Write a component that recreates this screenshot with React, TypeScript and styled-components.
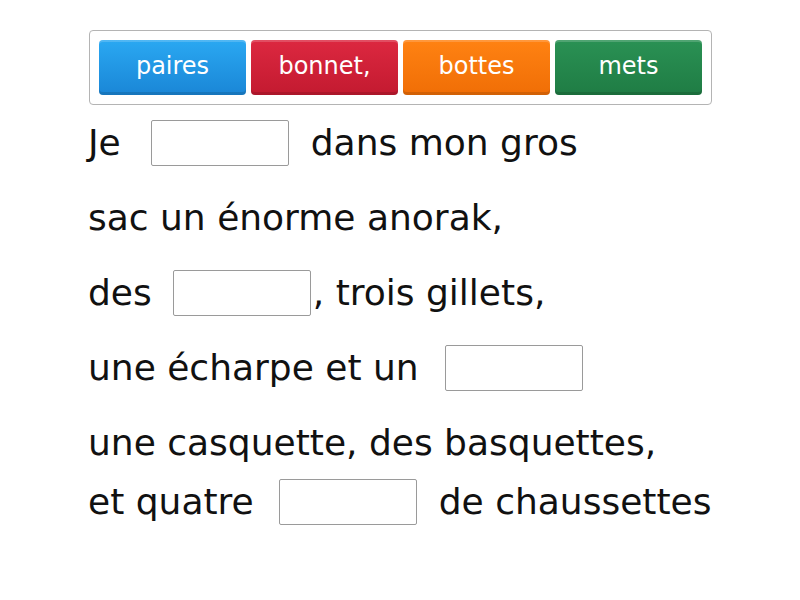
import React from 'react';
import styled, { createGlobalStyle } from 'styled-components';

const GlobalStyle = createGlobalStyle`
  html, body {
    margin: 0;
    padding: 0;
    background: #ffffff;
  }
  body {
    font-family: "DejaVu Sans", "Noto Sans", sans-serif;
  }
`;

interface Word {
  label: string;
  top: string;
  bottom: string;
}

const words: Word[] = [
  { label: 'paires', top: '#2aa8f2', bottom: '#1a86d6' },
  { label: 'bonnet,', top: '#dc2840', bottom: '#c31a30' },
  { label: 'bottes', top: '#ff8212', bottom: '#f06e06' },
  { label: 'mets', top: '#2a9154', bottom: '#1f7c44' },
];

const Page = styled.div`
  width: 800px;
  height: 600px;
  padding: 30px 0 0 88px;
  box-sizing: border-box;
`;

const Bank = styled.div`
  width: 623px;
  height: 75px;
  box-sizing: border-box;
  border: 1px solid #b4b4b4;
  border-radius: 4px;
  padding: 9px 0 0 9px;
  display: flex;
  gap: 5px;
  margin-left: 1px;
`;

const Tile = styled.div<{ $top: string; $bottom: string }>`
  width: 147px;
  height: 55px;
  box-sizing: border-box;
  border-radius: 4px;
  background: linear-gradient(${(p) => p.$top}, ${(p) => p.$bottom});
  box-shadow: inset 0 2px 0 rgba(255, 255, 255, 0.18), inset 0 -3px 0 rgba(0, 0, 0, 0.12);
  color: #ffffff;
  font-size: 24px;
  display: flex;
  align-items: center;
  justify-content: center;
  padding-bottom: 3px;
`;

const Text = styled.div`
  color: #111111;
  font-size: 36px;
`;

const Line = styled.div<{ $height: number }>`
  height: ${(p) => p.$height}px;
  display: flex;
  align-items: center;
  white-space: pre;
`;

const Blank = styled.span<{ $gapLeft: number; $gapRight: number }>`
  display: inline-block;
  flex-shrink: 0;
  width: 138px;
  height: 46px;
  box-sizing: border-box;
  border: 1px solid #9a9a9a;
  border-radius: 2px;
  background: #ffffff;
  margin: 0 ${(p) => p.$gapRight}px 0 ${(p) => p.$gapLeft}px;
`;

export default function App() {
  return (
    <>
      <GlobalStyle />
      <Page>
        <Bank>
          {words.map((w) => (
            <Tile key={w.label} $top={w.top} $bottom={w.bottom}>
              {w.label}
            </Tile>
          ))}
        </Bank>
        <Text>
          <Line $height={75}>
            Je<Blank $gapLeft={30} $gapRight={22} />dans mon gros
          </Line>
          <Line $height={75}>sac un énorme anorak,</Line>
          <Line $height={75}>
            des<Blank $gapLeft={21} $gapRight={2} />, trois gillets,
          </Line>
          <Line $height={75}>
            une écharpe et un<Blank $gapLeft={26} $gapRight={0} />
          </Line>
          <Line $height={75}>une casquette, des basquettes,</Line>
          <Line $height={43}>
            et quatre<Blank $gapLeft={25} $gapRight={22} />de chaussettes
          </Line>
        </Text>
      </Page>
    </>
  );
}
